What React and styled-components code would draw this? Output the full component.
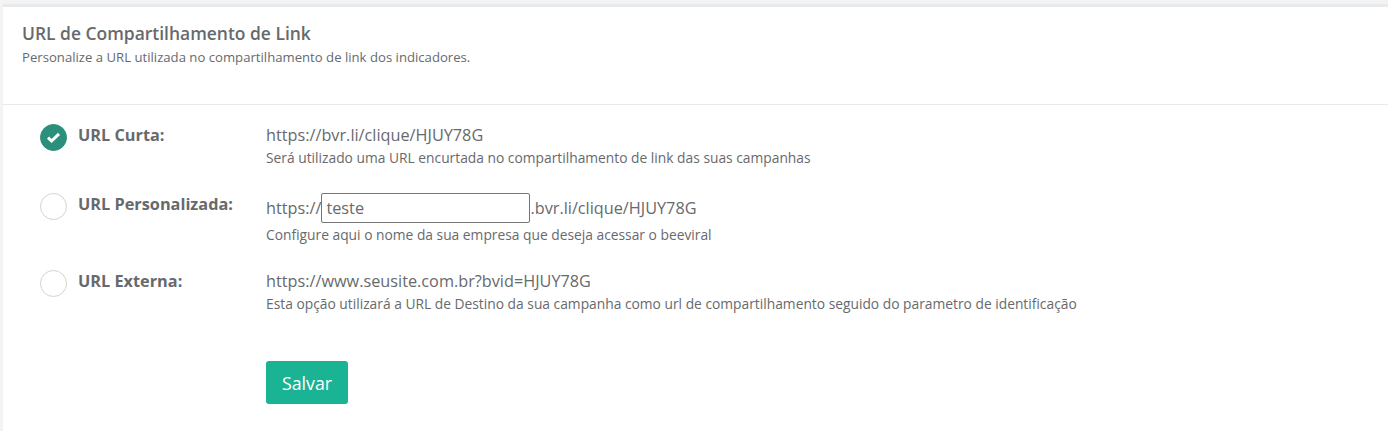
import React from 'react'
import styled, { createGlobalStyle } from 'styled-components'

const GlobalStyle = createGlobalStyle`
  html, body {
    margin: 0;
    padding: 0;
    height: 100%;
    background: #f3f3f4;
    font-family: "Open Sans", "Liberation Sans", sans-serif;
    color: #676a6c;
  }
`

const options = [
  {
    id: 'curta',
    label: 'URL Curta:',
    checked: true,
    url: 'https://bvr.li/clique/HJUY78G',
    help: 'Será utilizado uma URL encurtada no compartilhamento de link das suas campanhas',
  },
  {
    id: 'personalizada',
    label: 'URL Personalizada:',
    prefix: 'https://',
    value: 'teste',
    suffix: '.bvr.li/clique/HJUY78G',
    help: 'Configure aqui o nome da sua empresa que deseja acessar o beeviral',
  },
  {
    id: 'externa',
    label: 'URL Externa:',
    url: 'https://www.seusite.com.br?bvid=HJUY78G',
    help: 'Esta opção utilizará a URL de Destino da sua campanha como url de compartilhamento seguido do parametro de identificação',
  },
]

const App = () => {
  return (
    <>
      <GlobalStyle />
      <Page>
        <Panel>
          <Header>
            <Title>URL de Compartilhamento de Link</Title>
            <Subtitle>Personalize a URL utilizada no compartilhamento de link dos indicadores.</Subtitle>
          </Header>
          <Body>
            {options.map((item) => (
              <OptionRow key={item.id}>
                <Radio $checked={item.checked}>
                  {item.checked && (
                    <svg width="17" height="17" viewBox="0 0 17 17">
                      <path d="M3 8.6l3.6 3.4L14 4.9" fill="none" stroke="#fff" strokeWidth="3" />
                    </svg>
                  )}
                </Radio>
                <Label>{item.label}</Label>
                <Detail>
                  {item.url ? (
                    <Url>{item.url}</Url>
                  ) : (
                    <Url>
                      {item.prefix}
                      <NameInput defaultValue={item.value} />
                      {item.suffix}
                    </Url>
                  )}
                  <Help>{item.help}</Help>
                </Detail>
              </OptionRow>
            ))}
            <Actions>
              <SaveButton>Salvar</SaveButton>
            </Actions>
          </Body>
        </Panel>
      </Page>
    </>
  )
}

export default App

const Page = styled.div`
  min-height: 431px;
  padding: 4px 0 0 3px;
  box-sizing: border-box;
`

const Panel = styled.div`
  background: #fff;
  border-top: 3px solid #e7eaec;
  min-height: 424px;
`

const Header = styled.div`
  height: 98px;
  box-sizing: border-box;
  padding: 15px 19px 0;
  border-bottom: 1px solid #e7eaec;
`

const Title = styled.h5`
  margin: 0;
  font-size: 17.45px;
  font-weight: 600;
  line-height: 22px;
`

const Subtitle = styled.div`
  font-size: 13.15px;
  line-height: 18px;
  margin-top: 4px;
`

const Body = styled.div`
  padding: 19px 0 0 37px;
  display: flex;
  flex-direction: column;
  gap: 26px;
`

const OptionRow = styled.div`
  display: grid;
  grid-template-columns: 38px 188px 1fr;
`

const Radio = styled.div`
  width: 27px;
  height: 27px;
  box-sizing: border-box;
  border-radius: 50%;
  display: flex;
  align-items: center;
  justify-content: center;
  background: ${(props) => (props.$checked ? '#2c8f7b' : '#fff')};
  border: 1px solid ${(props) => (props.$checked ? '#2c8f7b' : '#d6d2cc')};
`

const Label = styled.div`
  font-size: 16.3px;
  font-weight: 700;
  line-height: 22px;
`

const Detail = styled.div`
  display: flex;
  flex-direction: column;
`

const Url = styled.div`
  font-size: 16.25px;
  line-height: 22px;
  display: flex;
  align-items: center;
`

const NameInput = styled.input`
  width: 209px;
  height: 30px;
  box-sizing: border-box;
  padding: 0 4px;
  border: 1px solid #767676;
  border-radius: 2px;
  font-family: inherit;
  font-size: 16.25px;
  color: #676a6c;
  outline: none;
`

const Help = styled.div`
  font-size: 13.8px;
  line-height: 18px;
  margin-top: 3px;
`

const Actions = styled.div`
  padding: 22px 0 0 226px;
`

const SaveButton = styled.button`
  width: 82px;
  height: 43px;
  border: none;
  border-radius: 3px;
  background: #1ab394;
  color: #fff;
  font-family: inherit;
  font-size: 17.8px;
`
